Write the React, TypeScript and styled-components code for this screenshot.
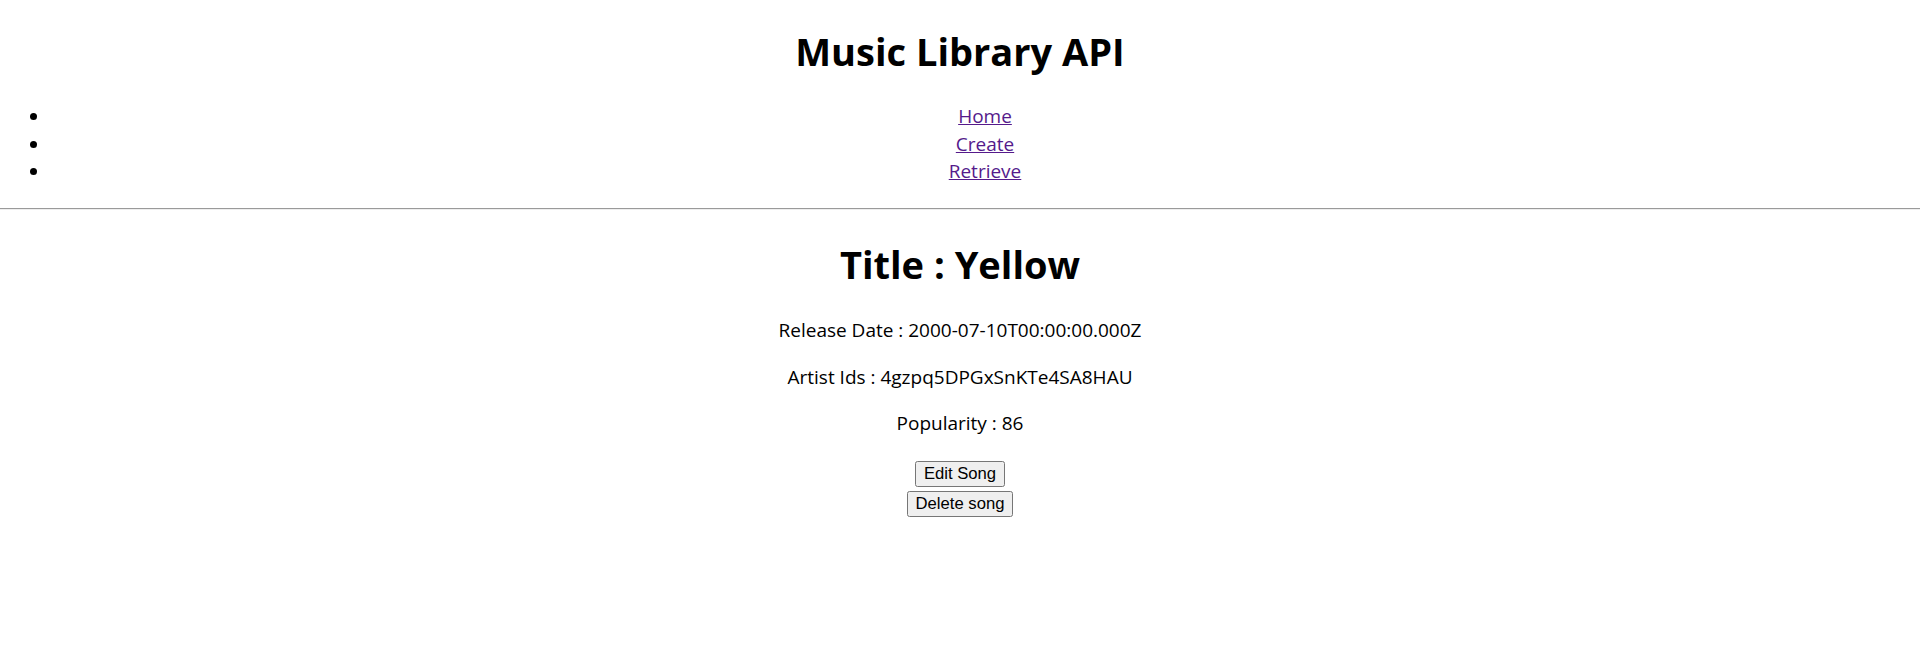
import React from "react";
import styled, { createGlobalStyle } from "styled-components";

const Global = createGlobalStyle`
  html, body { margin: 0; padding: 0; background: #fff; }
  body {
    font-family: "Open Sans", "Noto Sans", sans-serif;
    font-size: 19px;
    line-height: 26.6px;
    color: #000;
  }
`;

const Page = styled.div`
  display: flow-root;
`;

const Heading = styled.h1<{ $top: number; $bottom: number }>`
  font-size: 38px;
  font-weight: 700;
  line-height: 53px;
  text-align: center;
  margin: ${(p) => p.$top}px 0 ${(p) => p.$bottom}px;
`;

const NavList = styled.ul`
  margin: 0 0 22.5px;
  padding-left: 50px;
  list-style: disc;
  line-height: 27.5px;
`;

const NavItem = styled.li`
  text-align: center;
`;

const NavLink = styled.a`
  color: #551a8b;
  text-decoration: underline;
  &:visited { color: #551a8b; }
`;

const Rule = styled.hr`
  margin: 0;
  border: none;
  border-top: 1px solid #9a9a9a;
  border-bottom: 1px solid #eeeeee;
  height: 0;
`;

const Field = styled.p`
  margin: 0 0 20px;
  text-align: center;
`;

const Actions = styled.div`
  display: flex;
  flex-direction: column;
  align-items: center;
  gap: 4px;
  padding-top: 4px;
`;

const Button = styled.button`
  font-family: "Liberation Sans", Arial, sans-serif;
  font-size: 16.67px;
  line-height: 19px;
  padding: 2.5px 7.5px;
  color: #000;
  background: #efefef;
  border: 1px solid #767676;
  border-radius: 2.5px;
`;

export default function App() {
  return (
    <>
      <Global />
      <Page>
        <Heading $top={25} $bottom={25}>Music Library API</Heading>
        <NavList>
          <NavItem><NavLink href="#">Home</NavLink></NavItem>
          <NavItem><NavLink href="#">Create</NavLink></NavItem>
          <NavItem><NavLink href="#">Retrieve</NavLink></NavItem>
        </NavList>
        <Rule />
        <Heading $top={28} $bottom={26}>Title : Yellow</Heading>
        <Field>Release Date : 2000-07-10T00:00:00.000Z</Field>
        <Field>Artist Ids : 4gzpq5DPGxSnKTe4SA8HAU</Field>
        <Field>Popularity : 86</Field>
        <Actions>
          <Button>Edit Song</Button>
          <Button>Delete song</Button>
        </Actions>
      </Page>
    </>
  );
}
